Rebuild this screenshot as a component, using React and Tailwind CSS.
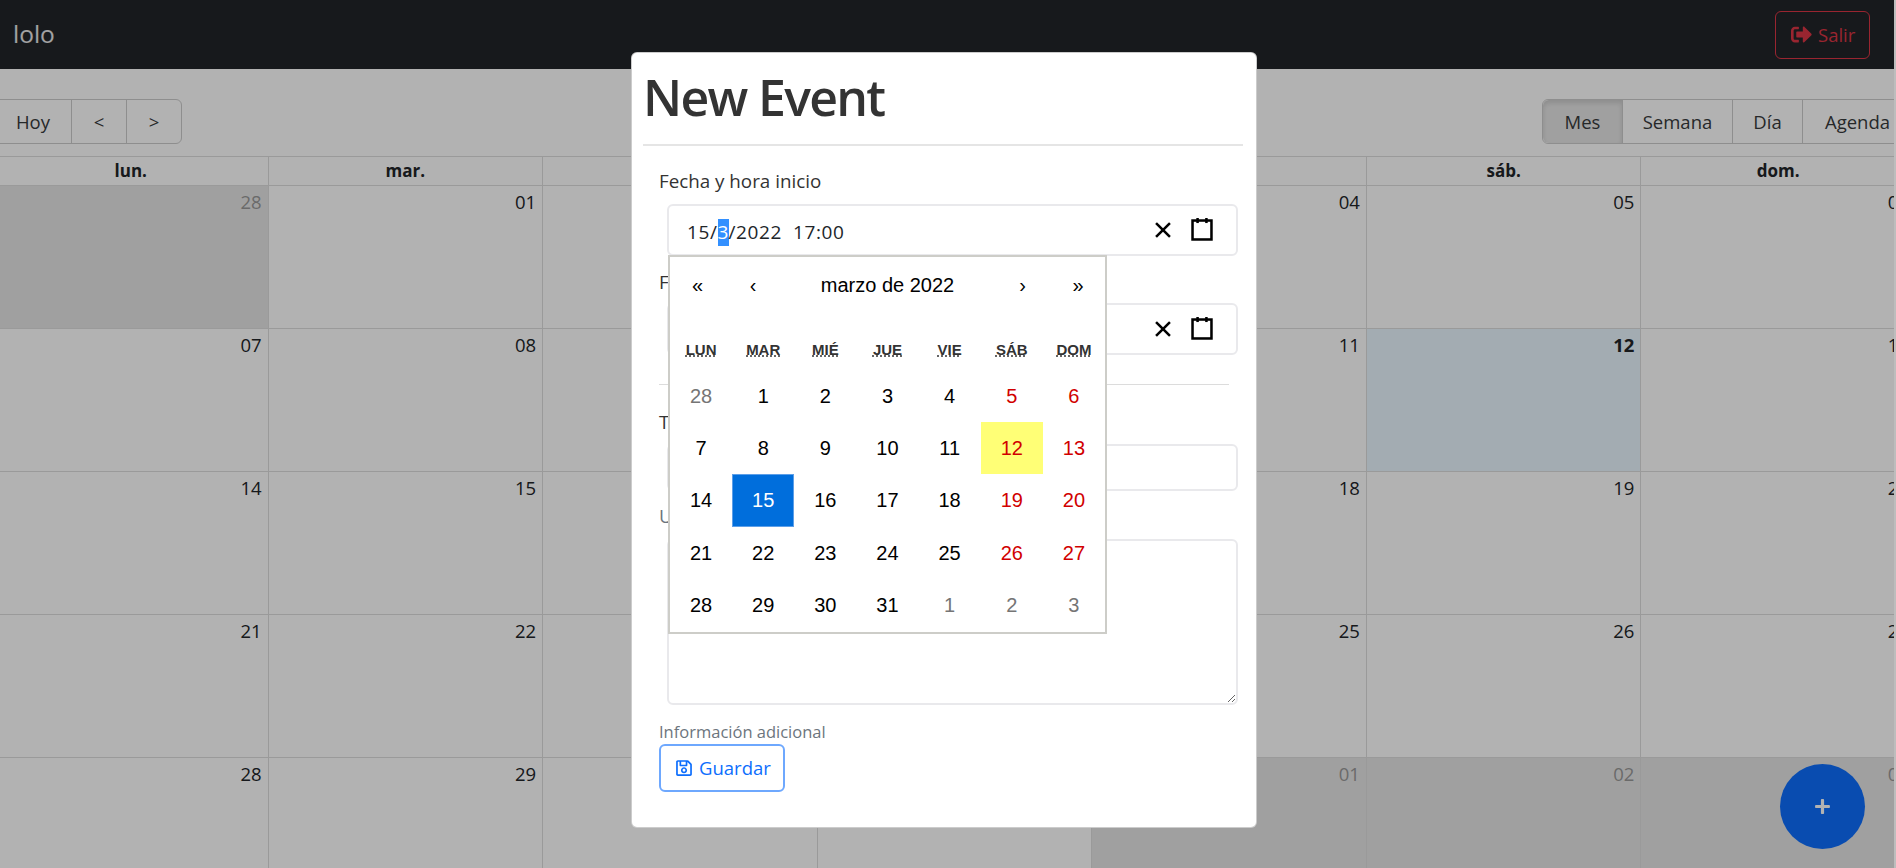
import { FaSignOutAlt, FaPlus, FaRegSave } from "react-icons/fa";

const days = ["lun.", "mar.", "mié.", "jue.", "vie.", "sáb.", "dom."];

const weeks = [
  [["28", 1], ["01"], ["02"], ["03"], ["04"], ["05"], ["06"]],
  [["07"], ["08"], ["09"], ["10"], ["11"], ["12", 2], ["13"]],
  [["14"], ["15"], ["16"], ["17"], ["18"], ["19"], ["20"]],
  [["21"], ["22"], ["23"], ["24"], ["25"], ["26"], ["27"]],
  [["28"], ["29"], ["30"], ["31"], ["01", 1], ["02", 1], ["03", 1]],
];

const pickerDays = ["LUN", "MAR", "MIÉ", "JUE", "VIE", "SÁB", "DOM"];

const pickerWeeks = [
  [28, 1, 2, 3, 4, 5, 6],
  [7, 8, 9, 10, 11, 12, 13],
  [14, 15, 16, 17, 18, 19, 20],
  [21, 22, 23, 24, 25, 26, 27],
  [28, 29, 30, 31, 1, 2, 3],
];

function ClearIcon() {
  return (
    <svg width="24" height="24" viewBox="0 0 19 19" stroke="black" strokeWidth="2">
      <line x1="4" y1="4" x2="15" y2="15" />
      <line x1="15" y1="4" x2="4" y2="15" />
    </svg>
  );
}

function CalendarIcon() {
  return (
    <svg width="24" height="24" viewBox="0 0 19 19" stroke="black" strokeWidth="2">
      <rect fill="none" x="2" y="2" width="15" height="15" />
      <line x1="6" y1="0" x2="6" y2="4" />
      <line x1="13" y1="0" x2="13" y2="4" />
    </svg>
  );
}

function DateField({ children }) {
  return (
    <div className="ml-[8px] w-[570.5px] h-[52px] flex items-center border-2 border-[#e9e9ec] rounded-md pl-[18px] pr-[22px] text-[19px] tracking-[0.6px] text-[#212529]">
      <div className="flex-1 whitespace-pre pt-[4px]">{children}</div>
      <div className="flex items-center gap-[15px]">
        <ClearIcon />
        <CalendarIcon />
      </div>
    </div>
  );
}

function Picker() {
  return (
    <div className="absolute left-[36px] top-[202px] w-[439px] h-[379px] bg-white border-2 border-[#cdcdc8] font-['Liberation_Sans',sans-serif] text-[20px] text-black">
      <div className="h-[55px] flex items-center text-center mb-[26px]">
        <span className="w-[58px] pr-[3px]">«</span>
        <span className="w-[52px] pr-[2px]">‹</span>
        <span className="flex-1">marzo de 2022</span>
        <span className="w-[58px] pr-[3px]">›</span>
        <span className="w-[52px] pr-[2px]">»</span>
      </div>
      <div className="grid grid-cols-7 h-[24px] items-center text-center text-[15px] font-bold text-[#333] underline decoration-dotted">
        {pickerDays.map((d) => (
          <div key={d}>{d}</div>
        ))}
      </div>
      <div className="grid grid-cols-7 mt-[7.5px]">
        {pickerWeeks.map((week, w) =>
          week.map((d, i) => {
            const other = (w === 0 && i === 0) || (w === 4 && i > 3);
            let cls = "text-black";
            if (other) cls = "text-[#757575]";
            else if (i > 4) cls = "text-[#d10000]";
            if (w === 1 && i === 5) cls += " bg-[#ffff76]";
            if (w === 2 && i === 1) cls = "bg-[#006edc] text-white border border-[#5d9fe8]";
            return (
              <div key={w + "-" + i} className={"h-[52.4px] flex items-center justify-center " + cls}>
                {d}
              </div>
            );
          })
        )}
      </div>
    </div>
  );
}

function Modal() {
  return (
    <div className="absolute left-[631px] top-[52px] w-[626px] h-[776px] bg-white rounded-md pl-[11px] pr-[13px] text-[18.5px] text-[#212529] border border-black/20">
      <h1 className="h-[91px] flex items-center pb-[2px] text-[50px] font-semibold tracking-[-1.7px] text-[#333]">New Event</h1>
      <div className="h-[2px] bg-[#e5e5e5]" />

      <form className="pl-[16px] pr-[14px] pt-[20px]">
        <label className="block h-[30px] leading-[30px] text-[18.8px] text-[#333]">Fecha y hora inicio</label>
        <div className="mt-[8px]">
          <DateField>
            15/<span className="inline-block w-[11px] h-[27px] leading-[27px] text-center tracking-normal bg-[#3390ff] text-white">3</span>/2022  17:00
          </DateField>
        </div>
        <label className="block h-[30px] leading-[30px] mt-[11px] text-[18.8px] text-[#333]">Fecha y hora fin</label>
        <div className="mt-[6px]">
          <DateField>15/3/2022  18:00</DateField>
        </div>
        <div className="h-px bg-[#dcdcdc] mt-[29px]" />
        <label className="block h-[30px] leading-[30px] mt-[22px] text-[18.8px] text-[#333]">Título</label>
        <input className="block ml-[8px] w-[570.5px] h-[47px] mt-[7px] border-2 border-[#e9e9ec] rounded-md" />
        <label className="block h-[30px] leading-[30px] mt-[10px] text-[18.8px] text-[#6c757d]">Una descripción corta</label>
        <textarea className="block ml-[8px] w-[570.5px] h-[166px] mt-[8px] border-2 border-[#e9e9ec] rounded-md" />
        <div className="h-[26px] leading-[26px] mt-[14px] -mb-[1px] text-[16.5px] text-[#6c757d]">Información adicional</div>
        <button
          type="button"
          className="flex items-center w-[126px] h-[48px] pl-[14px] border-2 border-[#6ea8fe] rounded-md text-[#0d6efd] bg-white"
        >
          <FaRegSave className="text-[18px]" />
          <span className="ml-[6px]">Guardar</span>
        </button>
      </form>

      <Picker />
    </div>
  );
}

export default function App() {
  return (
    <div className="relative w-screen h-screen overflow-hidden bg-white font-['Open_Sans',sans-serif] text-[18.5px] text-[#212529]">
      <nav className="h-[69px] bg-[#212529] flex items-center justify-between pl-[13px] pr-[26px]">
        <span className="text-[24.5px] text-white/90">lolo</span>
        <button className="flex items-center w-[95px] h-[48px] pl-[15px] border border-[#dc3545] rounded-md text-[#dc3545]">
          <FaSignOutAlt className="text-[21px]" />
          <span className="ml-[6px]">Salir</span>
        </button>
      </nav>

      <div className="w-[1922px] -ml-[6px]">
        <div className="flex justify-between items-start pt-[30px] h-[87px]">
          <div className="flex h-[45px] border border-[#ccc] rounded-md text-[#373a3c]">
            <span className="w-[77px] pt-[1px] flex items-center justify-center border-r border-[#ccc]">Hoy</span>
            <span className="w-[55px] pt-[1px] flex items-center justify-center border-r border-[#ccc]">&lt;</span>
            <span className="w-[54px] pt-[1px] flex items-center justify-center">&gt;</span>
          </div>
          <div className="flex h-[45px] border border-[#ccc] rounded-md text-[#373a3c] text-[18.5px]">
            <span className="w-[80px] pt-[1px] flex items-center justify-center bg-[#e6e6e6] rounded-l-md shadow-[inset_0_3px_5px_rgba(0,0,0,0.125)] border-r border-[#ccc]">Mes</span>
            <span className="w-[110px] pt-[1px] flex items-center justify-center border-r border-[#ccc]">Semana</span>
            <span className="w-[70px] pt-[1px] flex items-center justify-center border-r border-[#ccc]">Día</span>
            <span className="w-[112px] pt-[1px] pr-[3px] flex items-center justify-center">Agenda</span>
          </div>
        </div>

        <div className="border-t border-[#ddd]">
          <div className="grid grid-cols-7 h-[29px] border-b border-[#ddd]">
            {days.map((d) => (
              <div key={d} className="flex items-center justify-center font-bold text-[17px] border-r border-[#ddd] text-[#212529]">
                {d}
              </div>
            ))}
          </div>
          {weeks.map((week, w) => (
            <div key={w} className="grid grid-cols-7 h-[143px] border-b border-[#ddd]">
              {week.map(([n, kind], i) => (
                <div
                  key={i}
                  className={
                    "border-r border-[#ddd] text-right pr-[6px] pt-[2px] " +
                    (kind === 1 ? "bg-[#e6e6e6] text-[#999]" : kind === 2 ? "bg-[#eaf6ff] font-bold" : "")
                  }
                >
                  {n}
                </div>
              ))}
            </div>
          ))}
        </div>
      </div>

      <button className="absolute left-[1780px] top-[764px] w-[85px] h-[85px] rounded-full bg-[#0d6efd] text-white flex items-center justify-center">
        <FaPlus className="text-[17px]" />
      </button>

      <div className="absolute inset-0 bg-black/30" />

      <div className="absolute top-0 bottom-0 right-0 w-[2px] bg-[#bdbdbd]" />

      <Modal />
    </div>
  );
}
